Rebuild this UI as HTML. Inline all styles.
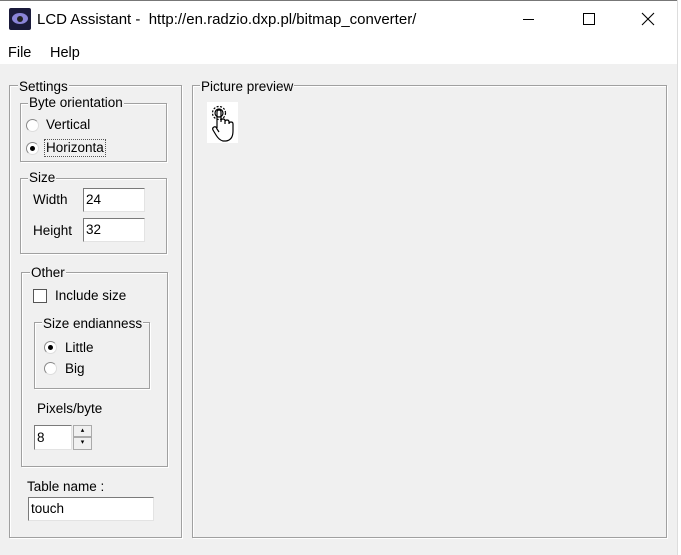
<!DOCTYPE html>
<html><head><style>
*{margin:0;padding:0;box-sizing:border-box}
body{width:681px;height:555px;background:#f0f0f0;font-family:"Liberation Sans",sans-serif;font-size:13px;color:#000;position:relative;overflow:hidden}
.a{position:absolute}
.gb{position:absolute;border:1px solid #a0a0a0;box-shadow:inset 1px 1px 0 #fff,1px 1px 0 #fff}
.lb{position:absolute;background:#f0f0f0;padding:0 1px;line-height:14px;font-size:13.5px}
.t{position:absolute;font-size:13.5px;line-height:16px}
.rad{position:absolute;width:13px;height:13px;border-radius:50%;border:1px solid #888;border-right-color:#ddd;border-bottom-color:#ddd;background:#fff}
.rad.on::after{content:"";position:absolute;left:3px;top:3px;width:5px;height:5px;border-radius:50%;background:#000}
.in{position:absolute;background:#fff;border:1px solid #7a7a7a;border-right-color:#e3e3e3;border-bottom-color:#e3e3e3;font-size:13.5px;line-height:22px;padding-left:2px}
</style></head><body>
<div class="a" style="left:0;top:0;width:681px;height:64px;background:#fff;border-top:1px solid #777"></div>
<div class="a" style="right:0;top:0;width:4px;height:555px;background:#fff;border-left:1px solid #ddd"></div>
<div class="a" style="left:9px;top:8px;width:22px;height:22px;background:#1a1a3a;border-radius:2px">
<div class="a" style="left:3px;top:5px;width:16px;height:11px;border-radius:50%;background:#8a84d8"></div>
<div class="a" style="left:8px;top:8px;width:6px;height:6px;border-radius:50%;background:#222"></div></div>
<div class="t" style="left:37px;top:11px;font-size:15px;line-height:18px;white-space:pre">LCD Assistant -  http://en.radzio.dxp.pl/bitmap_converter/</div>
<div class="a" style="left:523px;top:19px;width:11px;height:1px;background:#000"></div>
<div class="a" style="left:583px;top:13px;width:12px;height:12px;border:1px solid #000"></div>
<svg class="a" style="left:641px;top:12px" width="14" height="14"><path d="M1 1L13 13M13 1L1 13" stroke="#000" stroke-width="1.1"/></svg>
<div class="t" style="left:8px;top:45px;font-size:14.5px">File</div>
<div class="t" style="left:50px;top:45px;font-size:14.5px">Help</div>

<div class="gb" style="left:9px;top:85px;width:173px;height:453px"></div>
<div class="lb" style="left:18px;top:80px">Settings</div>
<div class="gb" style="left:20px;top:103px;width:147px;height:59px"></div>
<div class="lb" style="left:28px;top:96px">Byte orientation</div>
<div class="rad" style="left:26px;top:119px"></div><div class="t" style="left:46px;top:117px">Vertical</div>
<div class="rad on" style="left:26px;top:142px"></div><div class="t" style="left:45px;top:140px;outline:1px dotted #555;padding:0 1px">Horizonta</div>

<div class="gb" style="left:20px;top:178px;width:147px;height:76px"></div>
<div class="lb" style="left:28px;top:171px">Size</div>
<div class="t" style="left:33px;top:192px">Width</div>
<div class="in" style="left:83px;top:188px;width:62px;height:24px">24</div>
<div class="t" style="left:33px;top:223px">Height</div>
<div class="in" style="left:83px;top:218px;width:62px;height:24px">32</div>

<div class="gb" style="left:21px;top:272px;width:147px;height:195px"></div>
<div class="lb" style="left:30px;top:266px">Other</div>
<div class="a" style="left:33px;top:289px;width:14px;height:14px;background:#fff;border:1px solid #555"></div>
<div class="t" style="left:55px;top:288px">Include size</div>
<div class="gb" style="left:34px;top:322px;width:116px;height:67px"></div>
<div class="lb" style="left:42px;top:317px">Size endianness</div>
<div class="rad on" style="left:44px;top:341px"></div><div class="t" style="left:65px;top:340px">Little</div>
<div class="rad" style="left:44px;top:362px"></div><div class="t" style="left:65px;top:361px">Big</div>
<div class="t" style="left:37px;top:401px">Pixels/byte</div>
<div class="in" style="left:34px;top:425px;width:38px;height:25px;line-height:23px">8</div>
<div class="a" style="left:73px;top:425px;width:19px;height:12px;border:1px solid #aaa;background:#f0f0f0;font-size:7px;text-align:center;line-height:9px">▴</div>
<div class="a" style="left:73px;top:437px;width:19px;height:13px;border:1px solid #aaa;background:#f0f0f0;font-size:7px;text-align:center;line-height:10px">▾</div>
<div class="t" style="left:27px;top:479px">Table name :</div>
<div class="in" style="left:28px;top:497px;width:126px;height:24px">touch</div>

<div class="gb" style="left:192px;top:85px;width:475px;height:453px"></div>
<div class="lb" style="left:200px;top:80px">Picture preview</div>
<div class="a" style="left:207px;top:102px;width:31px;height:41px;background:#fff"></div>
<svg class="a" style="left:207px;top:102px" width="31" height="41" fill="none" stroke="#000" stroke-width="1.2">
<circle cx="12" cy="11" r="6.5" stroke-dasharray="2 1.5"/><circle cx="12" cy="11" r="4"/>
<path d="M10 26V10q0-2 2-2t2 2v10M14 19q0-2 2-2t2 2v3M18 20q0-2 2-2t2 2v2M22 22q0-2 2-2t2 2v7q0 9-7 10h-3q-4-1-7-6l-3-5q-1-2 1-3t3 2l2 3"/>
</svg>
</body></html>
